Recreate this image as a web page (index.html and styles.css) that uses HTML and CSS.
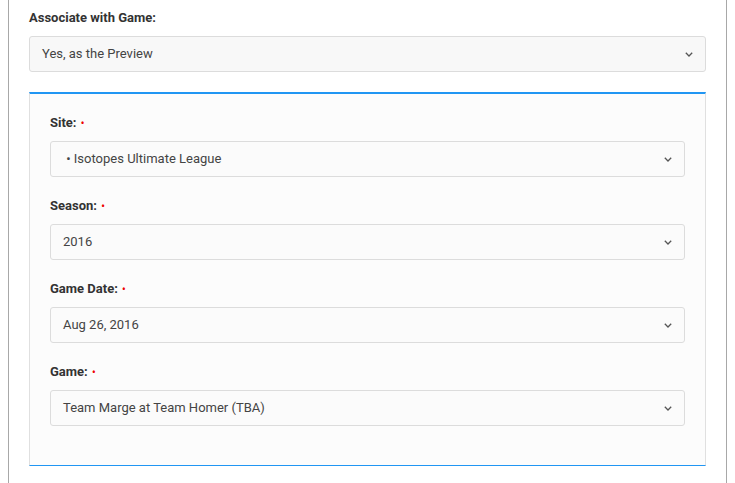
FILE: index.html
```html
<!DOCTYPE html>
<html>
<head>
<meta charset="utf-8">
<link rel="stylesheet" href="styles.css">
</head>
<body>
<div class="page">
  <div class="content">
    <div class="field">
      <label class="label">Associate with Game:</label>
      <div class="select select-outer">
        <span>Yes, as the Preview</span>
        <svg class="chev" width="8" height="5" viewBox="0 0 8 5"><path d="M0.8 0.8 L4 4 L7.2 0.8" fill="none" stroke="#555" stroke-width="1.3"/></svg>
      </div>
    </div>
    <div class="panel">
      <div class="field">
        <label class="label">Site: <span class="req">•</span></label>
        <div class="select">
          <span>&nbsp;• Isotopes Ultimate League</span>
          <svg class="chev" width="8" height="5" viewBox="0 0 8 5"><path d="M0.8 0.8 L4 4 L7.2 0.8" fill="none" stroke="#555" stroke-width="1.3"/></svg>
        </div>
      </div>
      <div class="field">
        <label class="label">Season: <span class="req">•</span></label>
        <div class="select">
          <span>2016</span>
          <svg class="chev" width="8" height="5" viewBox="0 0 8 5"><path d="M0.8 0.8 L4 4 L7.2 0.8" fill="none" stroke="#555" stroke-width="1.3"/></svg>
        </div>
      </div>
      <div class="field">
        <label class="label">Game Date: <span class="req">•</span></label>
        <div class="select">
          <span>Aug 26, 2016</span>
          <svg class="chev" width="8" height="5" viewBox="0 0 8 5"><path d="M0.8 0.8 L4 4 L7.2 0.8" fill="none" stroke="#555" stroke-width="1.3"/></svg>
        </div>
      </div>
      <div class="field last">
        <label class="label">Game: <span class="req">•</span></label>
        <div class="select">
          <span>Team Marge at Team Homer (TBA)</span>
          <svg class="chev" width="8" height="5" viewBox="0 0 8 5"><path d="M0.8 0.8 L4 4 L7.2 0.8" fill="none" stroke="#555" stroke-width="1.3"/></svg>
        </div>
      </div>
    </div>
  </div>
</div>
</body>
</html>
```

FILE: styles.css
```css
html, body {
  margin: 0;
  padding: 0;
  background: #ffffff;
  font-family: Roboto, "Liberation Sans", Arial, sans-serif;
  font-size: 13px;
  color: #444;
}
.page {
  margin-left: 8px;
  width: 717px;
  height: 483px;
  border-left: 1px solid #a8a8a8;
  border-right: 1px solid #a8a8a8;
  background: #fff;
  box-sizing: content-box;
}
.content {
  padding: 10px 20px 0 20px;
}
.field {
  display: flex;
  flex-direction: column;
  margin-bottom: 20px;
}
.panel .field {
  margin-bottom: 21px;
}
.panel .field.last {
  margin-bottom: 0;
}
.label {
  display: block;
  height: 16px;
  line-height: 16px;
  font-weight: 700;
  font-size: 13px;
  color: #333;
  margin-bottom: 10px;
}
.req {
  color: #e00;
  font-size: 10px;
  line-height: 1;
  margin-left: 1px;
}
.select {
  height: 36px;
  box-sizing: border-box;
  border: 1px solid #dcdcdc;
  border-radius: 3px;
  background: #fafafa;
  display: flex;
  align-items: center;
  justify-content: space-between;
  padding: 0 12px 1px 12px;
  color: #444;
  font-size: 13px;
}
.select-outer {
  background: #f8f8f8;
}
.chev {
  display: block;
  margin-top: 1px;
}
.panel {
  background: #fcfcfc;
  border-top: 2px solid #2196f3;
  border-bottom: 1px solid #2196f3;
  border-left: 1px solid #e0e0e0;
  border-right: 1px solid #e0e0e0;
  padding: 21px 20px 39px 20px;
}
.panel .select {
  background: #fbfbfb;
}
```
